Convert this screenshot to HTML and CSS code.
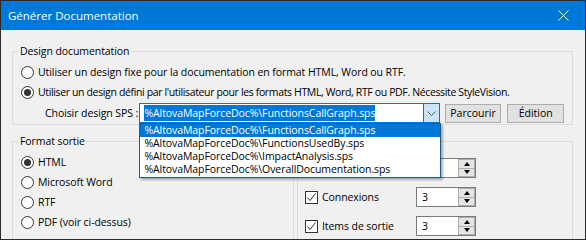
FILE: index.html
```html
<!DOCTYPE html>
<html lang="fr">
    <head>
        <meta charset="UTF-8">
        <title>Générer Documentation</title>
        <link rel="stylesheet" href="styles.css">
    </head>
    <body>
        <div class="window">
            <div class="titlebar">
                <span class="title">Générer Documentation</span>
                <svg class="close" width="11" height="11" viewBox="0 0 11 11">
                    <path d="M0.5 0.5 L10.5 10.5 M10.5 0.5 L0.5 10.5" stroke="#fff" stroke-width="1" fill="none"/>
                </svg>
            </div>
            <div class="content">
                <fieldset class="group group-design">
                    <legend>Design documentation</legend>
                    <label class="radio-row"><span class="radio"></span>Utiliser un design fixe pour la documentation en format HTML, Word ou RTF.</label>
                    <label class="radio-row tight"><span class="radio checked"></span>Utiliser un design défini par l'utilisateur pour les formats HTML, Word, RTF ou PDF. Nécessite StyleVision.</label>
                    <div class="sps-row">
                        <span class="sps-label">Choisir design SPS :</span>
                        <div class="combo">
                            <span class="combo-value">%AltovaMapForceDoc%\FunctionsCallGraph.sps</span>
                            <span class="combo-btn">
                                <svg width="9" height="5" viewBox="0 0 9 5">
                                    <path d="M0.5 0.5 L4.5 4.5 L8.5 0.5" stroke="#505a64" stroke-width="1" fill="none"/>
                                </svg>
                            </span>
                            <ul class="combo-list">
                                <li class="selected">%AltovaMapForceDoc%\FunctionsCallGraph.sps</li>
                                <li>%AltovaMapForceDoc%\FunctionsUsedBy.sps</li>
                                <li>%AltovaMapForceDoc%\ImpactAnalysis.sps</li>
                                <li>%AltovaMapForceDoc%\OverallDocumentation.sps</li>
                            </ul>
                        </div>
                        <button class="btn btn-browse">Parcourir</button>
                        <button class="btn">Édition</button>
                    </div>
                </fieldset>
                <div class="groups-row">
                    <fieldset class="group group-format">
                        <legend>Format sortie</legend>
                        <label class="radio-row"><span class="radio checked"></span>HTML</label>
                        <label class="radio-row"><span class="radio"></span>Microsoft Word</label>
                        <label class="radio-row"><span class="radio"></span>RTF</label>
                        <label class="radio-row"><span class="radio"></span>PDF (voir ci-dessus)</label>
                    </fieldset>
                    <!-- legend and first row label sit under the open list -->
                    <fieldset class="group group-depth">
                        <div class="check-row">
                            <span class="checkbox"></span>
                            <span class="check-label"></span>
                            <div class="spin"><span class="spin-value"></span><span class="spin-btns"><span class="spin-btn"><i class="arrow-up"></i></span><span class="spin-btn"><i class="arrow-down"></i></span></span></div>
                        </div>
                        <div class="check-row">
                            <span class="checkbox checked"><svg width="11" height="11" viewBox="0 0 11 11"><path d="M1.5 5.5 L4 8.5 L9.5 1.5" stroke="#333" stroke-width="1" fill="none"/></svg></span>
                            <span class="check-label">Connexions</span>
                            <div class="spin"><span class="spin-value">3</span><span class="spin-btns"><span class="spin-btn"><i class="arrow-up"></i></span><span class="spin-btn"><i class="arrow-down"></i></span></span></div>
                        </div>
                        <div class="check-row">
                            <span class="checkbox checked"><svg width="11" height="11" viewBox="0 0 11 11"><path d="M1.5 5.5 L4 8.5 L9.5 1.5" stroke="#333" stroke-width="1" fill="none"/></svg></span>
                            <span class="check-label">Items de sortie</span>
                            <div class="spin"><span class="spin-value">3</span><span class="spin-btns"><span class="spin-btn"><i class="arrow-up"></i></span><span class="spin-btn"><i class="arrow-down"></i></span></span></div>
                        </div>
                    </fieldset>
                </div>
            </div>
        </div>
    </body>
</html>
```

FILE: styles.css
```css
* {
    box-sizing: border-box;
}

body {
    margin: 0;
    font-family: "Open Sans", "Noto Sans", sans-serif;
    font-size: 10.5px;
    letter-spacing: -0.08px;
    line-height: 14px;
    color: #000;
    background-color: #f0f0f0;
}

.window {
    width: 586px;
    height: 240px;
    border: 1px solid #2b2b2b;
    background-color: #f0f0f0;
    overflow: hidden;
}

.titlebar {
    height: 29px;
    background-color: #0078d7;
    color: #fff;
    display: flex;
    align-items: center;
    justify-content: space-between;
    padding: 0 16px 0 7px;
    font-size: 11.5px;
    letter-spacing: 0;
}

.content {
    padding: 14px 12px 0 11px;
}

.group {
    margin: 0;
    padding: 4px 8px 1px;
    border: 1px solid #dcdcdc;
    min-width: 0;
}

.group legend {
    margin-left: -3px;
    padding: 0 2px;
    line-height: 14px;
}

.radio-row {
    display: flex;
    align-items: center;
    height: 20px;
    white-space: nowrap;
}

.radio-row.tight {
    letter-spacing: -0.36px;
}

.radio {
    width: 13px;
    height: 13px;
    margin-right: 4px;
    border: 1px solid #333;
    border-radius: 50%;
    background-color: #fff;
    display: inline-flex;
    align-items: center;
    justify-content: center;
    flex-shrink: 0;
}

.radio.checked::after {
    content: "";
    width: 7px;
    height: 7px;
    border-radius: 50%;
    background-color: #333;
}

/* SPS chooser */
.sps-row {
    display: flex;
    align-items: center;
    height: 20px;
    margin-top: 1px;
    padding-left: 24px;
}

.sps-label {
    width: 95px;
    white-space: nowrap;
}

.combo {
    position: relative;
    width: 302px;
    height: 20px;
    border: 1px solid #0078d7;
    background-color: #fff;
    display: flex;
    align-items: center;
}

.combo-value {
    margin-left: 4px;
    height: 16px;
    line-height: 16px;
    background-color: #0078d7;
    color: #fff;
}

.combo-btn {
    margin-left: auto;
    width: 16px;
    height: 18px;
    border-left: 1px solid #0078d7;
    background-color: #cce4f7;
    display: flex;
    align-items: center;
    justify-content: center;
}

.combo-list {
    position: absolute;
    top: 19px;
    left: -1px;
    width: 302px;
    margin: 0;
    padding: 0 0 1px;
    list-style: none;
    background-color: #fff;
    border: 1px solid #1e5a8e;
    box-shadow: 2px 2px 2px rgba(0, 0, 0, 0.3);
    z-index: 2;
}

.combo-list li {
    height: 13px;
    line-height: 13px;
    padding-left: 4px;
}

.combo-list li.selected {
    background-color: #0078d7;
    color: #fff;
}

.btn {
    width: 57px;
    height: 19px;
    margin-left: 6px;
    padding: 0;
    border: 1px solid #adadad;
    background-color: #e1e1e1;
    font: inherit;
    color: #000;
}

.btn-browse {
    margin-left: 5px;
}

/* bottom groups */
.groups-row {
    display: flex;
    gap: 3px;
    margin-top: 16px;
}

.group-format {
    width: 282px;
    height: 130px;
    margin-top: -7px;
}

.group-depth {
    flex: 1;
    height: 130px;
    padding: 16px 7px 0;
}

.check-row {
    display: flex;
    align-items: center;
    height: 20px;
    margin-bottom: 9px;
}

.checkbox {
    width: 13px;
    height: 13px;
    margin-right: 4px;
    border: 1px solid #333;
    background-color: #fff;
    display: flex;
    align-items: center;
    justify-content: center;
}

.check-label {
    width: 94px;
}

.spin {
    width: 60px;
    height: 20px;
    border: 1px solid #7a7a7a;
    background-color: #fff;
    display: flex;
}

.spin-value {
    flex: 1;
    padding-left: 5px;
    line-height: 18px;
}

.spin-btns {
    width: 17px;
    display: flex;
    flex-direction: column;
}

.spin-btn {
    flex: 1;
    border: 1px solid #adadad;
    background-color: #e5e5e5;
    display: flex;
    align-items: center;
    justify-content: center;
}

.spin-btn + .spin-btn {
    border-top: none;
}

.arrow-up {
    border-left: 3px solid transparent;
    border-right: 3px solid transparent;
    border-bottom: 4px solid #000;
}

.arrow-down {
    border-left: 3px solid transparent;
    border-right: 3px solid transparent;
    border-top: 4px solid #000;
}
```
